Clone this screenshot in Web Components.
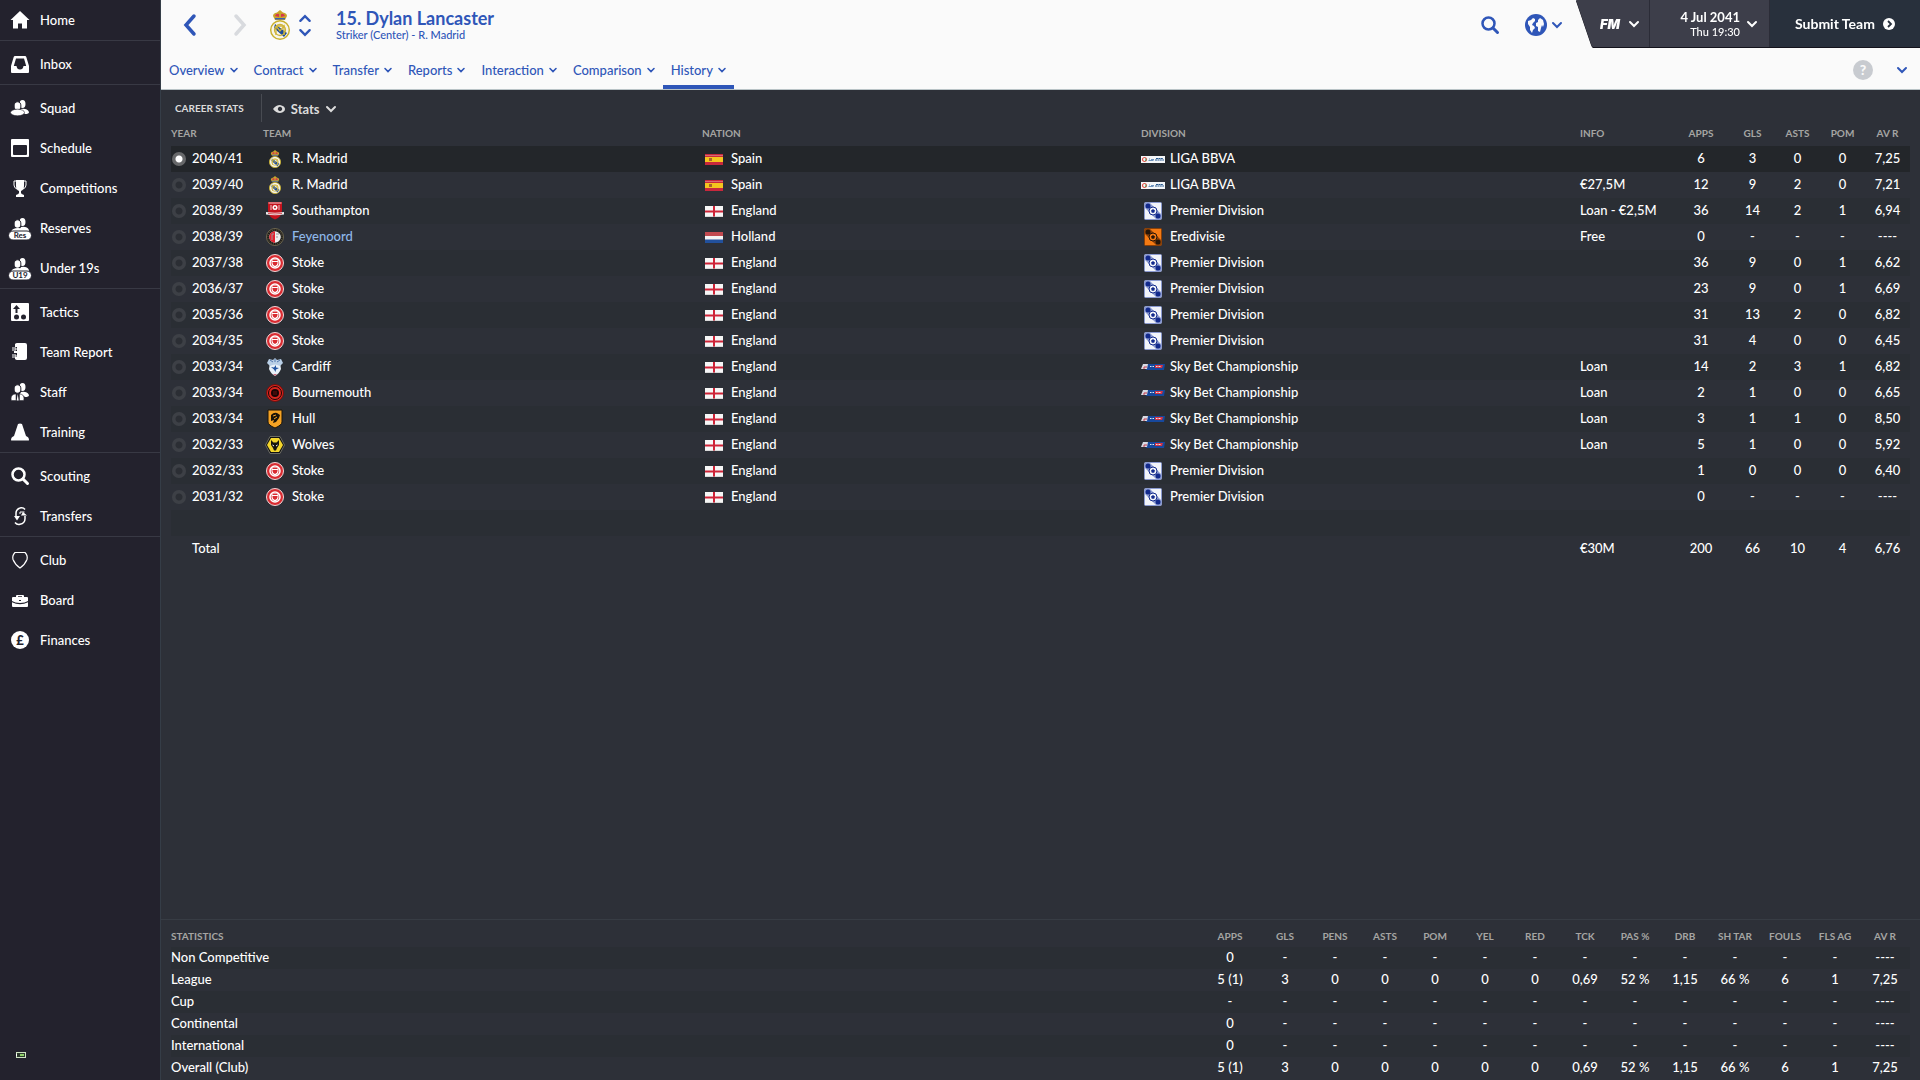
<!DOCTYPE html>
<html lang="en">
<head>
<meta charset="utf-8">
<title>Dylan Lancaster - History</title>
<style>
  :root {
    --blue: #2f56b8;
    --panel: #2d3038;
    --row-alt: #2a2e34;
    --row-selected: #23262a;
    --heading: #a5a5a3;
    --line: #373c44;
  }
  html, body { height: 100%; }
  body {
    margin: 0;
    background: var(--panel);
    color: #fff;
    font: 500 13px/16px Lato, "Liberation Sans", sans-serif;
  }
</style>
</head>
<body>
<fm-app>
  <fm-sidebar slot="sidebar">
    <fm-nav-group first>
      <fm-nav-item icon="home">Home</fm-nav-item>
    </fm-nav-group>
    <fm-nav-group>
      <fm-nav-item icon="inbox">Inbox</fm-nav-item>
    </fm-nav-group>
    <fm-nav-group>
      <fm-nav-item icon="squad">Squad</fm-nav-item>
      <fm-nav-item icon="schedule">Schedule</fm-nav-item>
      <fm-nav-item icon="trophy">Competitions</fm-nav-item>
      <fm-nav-item icon="reserves">Reserves</fm-nav-item>
      <fm-nav-item icon="under19">Under 19s</fm-nav-item>
    </fm-nav-group>
    <fm-nav-group>
      <fm-nav-item icon="tactics">Tactics</fm-nav-item>
      <fm-nav-item icon="report">Team Report</fm-nav-item>
      <fm-nav-item icon="staff">Staff</fm-nav-item>
      <fm-nav-item icon="cone">Training</fm-nav-item>
    </fm-nav-group>
    <fm-nav-group>
      <fm-nav-item icon="search">Scouting</fm-nav-item>
      <fm-nav-item icon="transfers">Transfers</fm-nav-item>
    </fm-nav-group>
    <fm-nav-group last>
      <fm-nav-item icon="club">Club</fm-nav-item>
      <fm-nav-item icon="board">Board</fm-nav-item>
      <fm-nav-item icon="finances">Finances</fm-nav-item>
    </fm-nav-group>
  </fm-sidebar>
  <fm-header slot="header">
    <span slot="title">15. Dylan Lancaster</span>
    <span slot="subtitle">Striker (Center) - R. Madrid</span>
    <fm-tab slot="tabs">Overview</fm-tab>
    <fm-tab slot="tabs">Contract</fm-tab>
    <fm-tab slot="tabs">Transfer</fm-tab>
    <fm-tab slot="tabs">Reports</fm-tab>
    <fm-tab slot="tabs">Interaction</fm-tab>
    <fm-tab slot="tabs">Comparison</fm-tab>
    <fm-tab slot="tabs" active>History</fm-tab>
  </fm-header>
  <fm-career-stats></fm-career-stats>
  <fm-season-stats slot="footer"></fm-season-stats>
</fm-app>

<script>
const people = `
  <ellipse cx="11.5" cy="4" rx="3" ry="4"/>
  <path d="M10 9q6-1 8 3 0 2-4 2-3-3-5-3z"/>
  <ellipse cx="6.5" cy="6" rx="3.4" ry="4.2" stroke="#23222d" stroke-width="1"/>`;

const badge = (text) => `<g transform="translate(0 -1)">${people}<ellipse cx="7" cy="13" rx="6.5" ry="3"/></g>
  <rect x="-2.5" y="12" width="23" height="9" rx="4.5" stroke="#23222d"/>
  <text x="9" y="19" text-anchor="middle" fill="#23222d" font-size="8" font-weight="700">${text}</text>`;

const football = (bg, ink, edge) => `
  <rect x=".5" y=".5" width="17" height="17" rx="1" fill="${bg}" stroke="${edge}"/>
  <path d="M1 1h5l11 11v5h-5L1 6z" fill="${edge}"/>
  <circle cx="4" cy="4" r="2.5" fill="${ink}"/><circle cx="14" cy="14" r="2.5" fill="${ink}"/>
  <circle cx="9" cy="9" r="4" fill="${bg}" stroke="${ink}"/>
  <path d="m9 7 2 1.5-.8 2.3H7.800L7 8.500z" fill="${ink}"/>`;

// name: [width, height, markup]
const ICONS = {
  home: [18, 18, '<path d="M9 0l9.500 9H16v8.500h-5v-5H7v5H2V9H-.5z"/>'],
  inbox: [18, 18, '<path fill-rule="evenodd" d="M4 1h10q1 0 1.300 1L18 11v6q0 1-1 1H1q-1 0-1-1v-6l2.700-9Q3 1 4 1zM5 3.500 2.800 11H5.500q.5 3.500 3.500 3.500t3.500-3.500h2.700L13 3.500z"/>'],
  squad: [18, 18, `<g transform="translate(0 1)">${people}<ellipse cx="6.5" cy="12.5" rx="7" ry="3.300" stroke="#23222d" stroke-width=".6"/></g>`],
  schedule: [18, 18, '<path fill-rule="evenodd" d="M1 0h16q1 0 1 1v16q0 1-1 1H1q-1 0-1-1V1q0-1 1-1zM3 6Q2 6 2 7v8q0 1 1 1h12q1 0 1-1V7q0-1-1-1z"/>'],
  trophy: [18, 18, '<path d="M5 1h8v6q0 4-3 5v2q0 1 3 2v2H5v-2q3-1 3-2v-2Q5 11 5 7z"/><path d="M5 2H3v4q0 3 3 4M13 2h2v4q0 3-3 4" fill="none" stroke="currentColor"/>'],
  reserves: [18, 18, badge('Res')],
  under19: [18, 18, badge('U19')],
  tactics: [18, 18, '<rect width="18" height="18" rx="1"/><g fill="#23222d"><circle cx="5.5" cy="14" r="2.5"/><circle cx="12.5" cy="14" r="2.5"/><path d="M5.500 2 9 6H6.500v4h-2V6H2z"/></g>'],
  report: [18, 18, '<path d="M4 1q1-1 2-1h8q2 0 2 2v13q0 2-2 2H6q-1 0-2-1v-2h2v-4H3V8h3V4H4z"/><path d="M1 5h4v2H1M1 12h4v2H1" fill="none" stroke="currentColor"/>'],
  staff: [18, 18, `${people}<path d="M5 11q-5 0-5 5 0 1.500 1 1.500h4zM8.500 11q4.500 0 4.500 5 0 1.500-1 1.500H8.500z" stroke="#23222d" stroke-width=".5"/><path d="m6.700 11 1 6.500h-2z"/>`],
  cone: [18, 18, '<path d="M7 1q2-1 4 0l4 12q3 1 3 4 0 .5-1 .5H1q-1 0-1-.5 0-3 3-4z"/>'],
  search: [18, 18, '<circle cx="7.5" cy="7.5" r="6" fill="none" stroke="currentColor" stroke-width="2.5"/><path d="m12 12 4.500 4.500" stroke="currentColor" stroke-width="3" stroke-linecap="round"/>'],
  transfers: [18, 18, '<path d="M14 2.500q-1.500-2-4-1.700-5 1-5 5.500V9M4 15.500q2 2.500 5 1.800 5-1 5-5.500V9" fill="none" stroke="currentColor" stroke-width="1.5"/><path d="M3 9h6l-3 4.500zM10 8.500 12 5l4 3.500z"/><path d="M13.500 5H9v2" fill="none" stroke="currentColor"/>'],
  club: [18, 18, '<path d="M4 1.500h10q3 3 2 7-2 5-7 8.500Q4 13.500 2 8.500q-1-4 2-7z" fill="none" stroke="currentColor" stroke-width="1.2"/>'],
  board: [18, 18, '<path fill-rule="evenodd" d="M5 6V5q0-1 1-1h6q1 0 1 1v1h3q1 0 1 1v3q-3 2-8 2t-8-2V7q0-1 1-1zm2 0h4V5.300H7zM8 9v1h2V9z"/><path d="M1 11.200q4 2 8 2t8-2V15q0 1-1 1H2q-1 0-1-1z"/>'],
  finances: [18, 18, '<circle cx="9" cy="9" r="9"/><text x="9" y="13.5" text-anchor="middle" fill="#23222d" font-size="13" font-weight="900">£</text>'],
  back: [12, 22, '<path d="M10 2 2 11l8 9" fill="none" stroke="currentColor" stroke-width="3.5" stroke-linecap="round"/>'],
  forward: [12, 22, '<path d="m2 2 8 9-8 9" fill="none" stroke="currentColor" stroke-width="3.5" stroke-linecap="round"/>'],
  down: [10, 6, '<path d="m1 1 4 4 4-4" fill="none" stroke="currentColor" stroke-width="2" stroke-linecap="round"/>'],
  small: [8, 6, '<path d="m1 1.500 3 3 3-3" fill="none" stroke="currentColor" stroke-width="1.6" stroke-linecap="round"/>'],
  up: [10, 6, '<path d="m1 5 4-4 4 4" fill="none" stroke="currentColor" stroke-width="2" stroke-linecap="round"/>'],
  globe: [22, 22, '<circle cx="11" cy="11" r="11"/><path fill="#fafafa" d="M3 7l3-1 2-2 2 1v2L8 9l-1 2 2 1 1 2-2 2-1 3-2-3v-3L3 10zM13 6l2-2 3 2 1 4-1 3-1-2-1 3-1 4-2-1v-4l-2-1v-3l2-1z"/>'],
  go: [12, 12, '<circle cx="6" cy="6" r="6"/><path d="m5 3 3 3-3 3" fill="none" stroke="#28303c" stroke-width="1.8"/>'],
  help: [20, 20, '<circle cx="10" cy="10" r="10"/><text x="10" y="15" text-anchor="middle" fill="#fafafa" font-size="14" font-weight="900">?</text>'],
  eye: [12, 8, '<path fill-rule="evenodd" d="M0 4q3-4 7-4 5 1 5 4t-5 4Q3 8 0 4zm7-2.200a2.200 2.200 0 1 0 .01 0z"/>'],
  battery: [10, 6, '<rect x=".5" y=".5" width="9" height="5" fill="#2c3a2c" stroke="#cfe3c2"/><path d="M0 2h1v2H0z"/><path d="M4 2h4v2H4z" fill="#8fd16a"/>'],

  madrid: [20, 30, `
    <path d="M3 6q0-3 4-3.500L10 0l3 2.500q4 .5 4 3.500l-2 4H5z" fill="#c9a52c"/>
    <path d="M5 6q1-3 4-2v3zM15 6q-1-3-4-2v3z" fill="#d7364a"/><path d="M5 8h10v1.500H5z" fill="#3a62b0"/>
    <circle cx="10" cy="20" r="9.3" fill="#f7f5ea" stroke="#c9b02c" stroke-width="1.4"/>
    <path d="m5 14 12 9-3 4L4 18z" fill="#1d4c9c"/>
    <circle cx="10" cy="20" r="5.5" fill="none" stroke="#cfb43a" stroke-width="1.3"/>
    <path d="M6 16v9M6 16l4 5 4-5v9M6 16h7" stroke="#cfb43a" stroke-width="1.3" fill="none"/>`],
  southampton: [18, 18, `
    <path d="M2 0h14v8q0 7-7 9.500Q2 15 2 8z" fill="#c5131d"/>
    <path d="M5 3v5M13 3v5M2.500 1h13" stroke="#f0c9cb"/><circle cx="9" cy="5.5" r="2.5" fill="#fff"/><circle cx="9" cy="5.5" r="1" fill="#c5131d"/>
    <path d="M0 10q9 1.500 18 0v2.500q-9 1.500-18 0z" fill="#eee"/><path d="M2 11.500q7 1 14 0" stroke="#c5131d" fill="none" stroke-width=".7"/>`],
  feyenoord: [18, 18, `
    <circle cx="9" cy="9" r="8.5" fill="#191714" stroke="#6f6850"/><circle cx="9" cy="9" r="7" fill="none" stroke="#6f6850" stroke-dasharray="1 1"/>
    <circle cx="9" cy="9" r="5.8" fill="#eee"/><path d="M9 3.200a5.800 5.800 0 0 0 0 11.600z" fill="#e3202e"/>
    <path d="M6 6h2M6 6v6M10 6h3M10 9h2" stroke="#999"/>`],
  stoke: [18, 18, `
    <circle cx="9" cy="9" r="8.5" fill="#d92b31" stroke="#f3d7d8"/>
    <circle cx="9" cy="9" r="5" fill="#d92b31" stroke="#fff" stroke-width="1.5"/>
    <path d="M5.500 5.500h7V9q0 3-3.500 4.500Q5.500 12 5.500 9z" fill="#fff"/><path d="M6.500 8h5v1q0 2-2.500 3-2.500-1-2.500-3zM6.500 6h5v1h-5z" fill="#d92b31"/>`],
  cardiff: [18, 18, `
    <path d="M4 5q5-3 10 0l1 6q-2 5-6 7-4-2-6-7z" fill="#e9f1f8"/>
    <path d="M3 1l4 1 2-2 2 2 4-1 2 4-3 3q-5-3-10 0L1 5z" fill="#b9cfe6"/>
    <path d="M4 2l3 2M14 2l-3 2M9 1v3" stroke="#5378ad"/>
    <path d="M5 9l3 .5L10 7v2.500l3 .5-3 1.500L9.500 14 8 11.500z" fill="#2153a0"/><path d="M7 16h4l-2 2z" fill="#c86b79"/>`],
  bournemouth: [18, 18, `
    <circle cx="9" cy="9" r="8.5" fill="#d9261f" stroke="#6d100e"/><circle cx="9" cy="9" r="6.5" fill="none" stroke="#190404" stroke-width="1"/>
    <circle cx="9" cy="9" r="4" fill="#190404"/><path d="M7 8h4M7 10h4" stroke="#6d100e"/>`],
  hull: [18, 18, `
    <path d="M2 0h14v12q0 3-7 6-7-3-7-6z" fill="#f5a324" stroke="#1c1509"/>
    <path d="M5 5q3-3 6-2l3 2-1 3-3 4-3 1 1-3-3 1z" fill="#1c1509"/><path d="m7 6 3-1M8 9l3-2M6 15h6" stroke="#f5a324"/>`],
  wolves: [20, 18, `
    <path d="M5 .5h10L19.500 9 15 17.500H5L.5 9z" fill="#121212" stroke="#6b6b62"/><path d="M6 2h8l4 7-4 7H6L2 9z" fill="#f4d62c"/>
    <path d="m6 4 2.500 2.500h3L14 4v5l-2 3-1 2.500H9L8 12 6 9z" fill="#16150f"/><path d="m7.500 9 1.500 1M12.500 9l-1.500 1" stroke="#fff"/>`],

  spain: [18, 11, '<path fill="#c8283c" d="M0 0h18v11H0z"/><path fill="#f4c51e" d="M0 3h18v5H0z"/><path fill="#e2a9a9" opacity=".5" d="M0 1h18v1H0z"/><path fill="#a8632b" d="M4 4h3v3H4z"/>'],
  england: [18, 11, '<path fill="#f6f6f6" d="M0 0h18v11H0z"/><path fill="#cf2438" d="M8 0h2v11H8zM0 4.500h18v2H0z"/><path fill="#bbb" opacity=".5" d="M0 10h18v1H0z"/>'],
  holland: [18, 11, '<path fill="#f4f4f4" d="M0 0h18v11H0z"/><path fill="#c24a50" d="M0 0h18v4H0z"/><path fill="#22509c" d="M0 7.500h18V11H0z"/>'],

  liga: [24, 7, '<path fill="#f4f6f8" d="M0 0h24v7H0z"/><circle cx="3.5" cy="3.5" r="2" fill="none" stroke="#e2574c" stroke-width="1.2"/><path d="M4.500 2.500a2 2 0 0 1 0 2.500" stroke="#3ba55d" fill="none"/><path d="M7.500 4.500h5M8 3h1M10 3.500h3" stroke="#6e93bd"/><path d="M14 4h9M15 2.500h7" stroke="#27598f" stroke-width="1.2" stroke-dasharray="2 .4"/>'],
  premier: [18, 18, football('#f2f4fa', '#12298c', '#8b9ad0')],
  eredivisie: [18, 18, football('#f47a14', '#22140a', '#8a4008')],
  skybet: [24, 8, '<path d="M7 1h17l-1 6H5z" fill="#17489c"/><path d="M2 1h5l-1 5H0z" fill="#d9dbe4"/><path d="M3 4h3M2 5h2" stroke="#c23b4c"/><path d="M14 2h8l-1 3h-7z" fill="#d8323f"/><path d="M9 3.500h4M15 3.500h5" stroke="#dfe7f5" stroke-dasharray="1 .5"/>'],
};

function define(name, html, setup) {
  const template = document.createElement('template');
  template.innerHTML = html;
  customElements.define(name, class extends HTMLElement {
    constructor() {
      super();
      this.attachShadow({ mode: 'open' }).append(template.content.cloneNode(true));
    }

    connectedCallback() {
      if (setup) setup(this, this.shadowRoot);
    }
  });
}

/* Icon: <fm-icon name="home" size="..."> where size is the drawn height */
define('fm-icon', `
  <style>
    :host { display: inline-flex; flex: none; }
    svg { display: block; fill: currentColor; overflow: visible; }
  </style>
`, (host, root) => {
  const [w, h, markup] = ICONS[host.getAttribute('name')];
  const height = Number(host.getAttribute('size')) || h;
  const width = Math.round(w * height / h);
  root.querySelector('svg')?.remove();
  root.innerHTML += `<svg viewBox="0 0 ${w} ${h}" width="${width}" height="${height}" aria-hidden="true">${markup}</svg>`;
});

define('fm-app', `
  <style>
    :host { display: flex; min-height: 100vh; }
    .page { flex: 1; min-width: 0; display: flex; flex-direction: column; border-left: 1px solid #353d47; }
    main { flex: 1; display: flex; flex-direction: column; }
    .content { flex: 1; }
  </style>
  <slot name="sidebar"></slot>
  <div class="page">
    <slot name="header"></slot>
    <main>
      <div class="content"><slot></slot></div>
      <slot name="footer"></slot>
    </main>
  </div>
`);

define('fm-sidebar', `
  <style>
    :host { display: flex; flex-direction: column; justify-content: space-between; width: 160px; flex: none; background: #23222d; }
    footer { padding: 0 16px 22px; line-height: 0; }
  </style>
  <nav aria-label="Main"><slot></slot></nav>
  <footer><fm-icon name="battery"></fm-icon></footer>
`);

define('fm-nav-group', `
  <style>
    :host { display: block; padding-top: 3px; border-bottom: 1px solid #383944; }
    :host([first]) { padding-top: 0; }
    :host([last]) { border-bottom: 0; }
  </style>
  <slot></slot>
`);

define('fm-nav-item', `
  <style>
    :host { display: block; }
    a { display: flex; align-items: center; gap: 11px; height: 40px; padding-left: 11px; color: #fff; text-decoration: none; }
    a:focus-visible { background: #2e2d3a; }
    span { padding-bottom: 1px; }
  </style>
  <a href="#"><span><slot></slot></span></a>
`, (host, root) => {
  const icon = document.createElement('fm-icon');
  icon.setAttribute('name', host.getAttribute('icon'));
  root.querySelector('a').prepend(icon);
});

define('fm-tab', `
  <style>
    :host { display: flex; }
    button {
      display: flex; align-items: center; gap: 5px; padding: 4px 8px 0;
      border: 0; border-bottom: 4px solid transparent; background: none;
      color: var(--blue); font: inherit; cursor: pointer;
    }
    :host([active]) button { border-color: var(--blue); }
  </style>
  <button type="button"><slot></slot><fm-icon name="small"></fm-icon></button>
`);

define('fm-header', `
  <style>
    :host { display: block; background: #fafafa; color: var(--blue); border-bottom: 1px solid #b9c3c6; }
    button { display: flex; align-items: center; padding: 0; border: 0; background: none; color: inherit; font: inherit; cursor: pointer; }
    .top { display: flex; align-items: flex-start; height: 50px; }
    .player { display: flex; align-items: center; height: 50px; padding-left: 23px; }
    .forward { color: #d8dade; margin: 0 24px 0 38px; }
    .steps { display: flex; flex-direction: column; gap: 7px; margin: 0 25px 0 9px; }
    h1 { margin: 0; font-size: 18px; line-height: 20px; font-weight: 700; }
    p { margin: 0; font-size: 11px; line-height: 14px; }
    .tools { display: flex; align-items: center; height: 50px; margin-left: auto; }
    .globe { gap: 5px; margin: 0 14px 0 26px; }
    .game { display: flex; height: 47px; color: #fff; filter: drop-shadow(0 1px 0 #14131c); }
    .slant { display: block; fill: #3d3e4a; }
    .game button { background: #3d3e4a; border-right: 1px solid #2b2c37; }
    .game .fm { width: 57px; gap: 9px; padding-left: 7px; font: italic 900 13px/16px Inter, sans-serif; }
    .game .date { width: 120px; justify-content: flex-end; gap: 7px; padding-right: 12px; text-align: right; }
    .date strong { display: block; font-size: 13px; line-height: 16px; }
    .date small { display: block; font-size: 11px; line-height: 14px; }
    .game .submit { width: 150px; padding-left: 25px; gap: 8px; background: #28303c; border: 0; font-size: 14px; font-weight: 700; }
    .tabs { display: flex; height: 39px; }
    .tabs nav { display: flex; }
    .side { display: flex; align-items: center; gap: 24px; margin-left: auto; padding-right: 13px; }
    .help { color: #c8cbd0; }
  </style>
  <div class="top">
    <div class="player">
      <button type="button" aria-label="Back"><fm-icon name="back"></fm-icon></button>
      <button type="button" class="forward" aria-label="Forward"><fm-icon name="forward"></fm-icon></button>
      <fm-icon name="madrid" size="30"></fm-icon>
      <div class="steps">
        <button type="button" aria-label="Previous player"><fm-icon name="up" size="7"></fm-icon></button>
        <button type="button" aria-label="Next player"><fm-icon name="down" size="7"></fm-icon></button>
      </div>
      <div>
        <h1><slot name="title"></slot></h1>
        <p><slot name="subtitle"></slot></p>
      </div>
    </div>
    <div class="tools">
      <button type="button" aria-label="Search"><fm-icon name="search"></fm-icon></button>
      <button type="button" class="globe" aria-label="World"><fm-icon name="globe"></fm-icon><fm-icon name="down"></fm-icon></button>
    </div>
    <div class="game">
      <svg class="slant" width="17" height="47" viewBox="0 0 17 47" aria-hidden="true"><path d="M0 0h17v47q-1 0-2-3z"/></svg>
      <button type="button" class="fm">FM<fm-icon name="down"></fm-icon></button>
      <button type="button" class="date"><span><strong>4 Jul 2041</strong><small>Thu 19:30</small></span><fm-icon name="down"></fm-icon></button>
      <button type="button" class="submit">Submit Team<fm-icon name="go"></fm-icon></button>
    </div>
  </div>
  <div class="tabs">
    <nav aria-label="Player"><slot name="tabs"></slot></nav>
    <div class="side">
      <button type="button" class="help" aria-label="Help"><fm-icon name="help"></fm-icon></button>
      <button type="button" aria-label="More"><fm-icon name="down"></fm-icon></button>
    </div>
  </div>
`);

const TEAMS = {
  'R. Madrid': 'madrid', Southampton: 'southampton', Feyenoord: 'feyenoord', Stoke: 'stoke',
  Cardiff: 'cardiff', Bournemouth: 'bournemouth', Hull: 'hull', Wolves: 'wolves',
};
const DIVISIONS = {
  'LIGA BBVA': 'liga', 'Premier Division': 'premier', Eredivisie: 'eredivisie', 'Sky Bet Championship': 'skybet',
};

// year, team, nation, division, info, apps, goals, assists, player of the match, average rating
const CAREER = [
  ['2040/41', 'R. Madrid', 'Spain', 'LIGA BBVA', '', '6', '3', '0', '0', '7,25'],
  ['2039/40', 'R. Madrid', 'Spain', 'LIGA BBVA', '€27,5M', '12', '9', '2', '0', '7,21'],
  ['2038/39', 'Southampton', 'England', 'Premier Division', 'Loan - €2,5M', '36', '14', '2', '1', '6,94'],
  ['2038/39', 'Feyenoord', 'Holland', 'Eredivisie', 'Free', '0', '-', '-', '-', '----'],
  ['2037/38', 'Stoke', 'England', 'Premier Division', '', '36', '9', '0', '1', '6,62'],
  ['2036/37', 'Stoke', 'England', 'Premier Division', '', '23', '9', '0', '1', '6,69'],
  ['2035/36', 'Stoke', 'England', 'Premier Division', '', '31', '13', '2', '0', '6,82'],
  ['2034/35', 'Stoke', 'England', 'Premier Division', '', '31', '4', '0', '0', '6,45'],
  ['2033/34', 'Cardiff', 'England', 'Sky Bet Championship', 'Loan', '14', '2', '3', '1', '6,82'],
  ['2033/34', 'Bournemouth', 'England', 'Sky Bet Championship', 'Loan', '2', '1', '0', '0', '6,65'],
  ['2033/34', 'Hull', 'England', 'Sky Bet Championship', 'Loan', '3', '1', '1', '0', '8,50'],
  ['2032/33', 'Wolves', 'England', 'Sky Bet Championship', 'Loan', '5', '1', '0', '0', '5,92'],
  ['2032/33', 'Stoke', 'England', 'Premier Division', '', '1', '0', '0', '0', '6,40'],
  ['2031/32', 'Stoke', 'England', 'Premier Division', '', '0', '-', '-', '-', '----'],
];

const tableStyles = `
  table { width: 100%; table-layout: fixed; border-collapse: collapse; }
  th, td { box-sizing: border-box; padding: 0; text-align: left; white-space: nowrap; font-weight: 500; }
  thead th { padding-bottom: 2px; color: var(--heading); font-size: 10px; line-height: 12px; font-weight: 700; }
  .n { padding-bottom: 2px; text-align: center; }
`;

const numbers = (values, tag = 'td') => values.map((v) => `<${tag} class="n">${v}</${tag}>`).join('');

define('fm-career-stats', `
  <style>
    ${tableStyles}
    :host { display: block; padding: 4px 10px 0; }
    .bar { display: flex; align-items: center; height: 27px; padding-left: 4px; }
    h2 { margin: 0; padding-right: 17px; font-size: 10px; line-height: 28px; color: #dcdcdc; border-right: 1px solid #484b52; }
    .view { display: flex; align-items: center; gap: 6px; padding: 2px 0 0 11px; border: 0; background: none; color: #dcdcdc; font: inherit; font-weight: 700; cursor: pointer; }
    thead th { height: 25px; }
    tbody td { height: 26px; }
    tbody tr:nth-child(odd) { background: var(--row-alt); }
    tbody tr:has(input:checked) { background: var(--row-selected); }
    .year { width: 92px; }
    .info { width: 92px; }
    .apps { width: 58px; }
    .num { width: 45px; }
    .fee { padding-bottom: 2px; }
    .cell { display: flex; align-items: center; }
    .mark { display: flex; justify-content: center; width: 24px; margin-right: 5px; }
    .cell a { padding-bottom: 2px; color: inherit; text-decoration: none; }
    .cell .foreign { color: #8fb8ea; }
    label { display: flex; align-items: center; gap: 6px; padding-left: 1px; }
    label span { padding-bottom: 2px; }
    input {
      appearance: none; width: 14px; height: 14px; margin: 0; border-radius: 50%;
      background: radial-gradient(circle, #2b2e34 3px, #3d4046 4px);
    }
    input:checked { background: radial-gradient(circle, #fff 3px, #67686a 4px); }
    .total td:first-child { padding: 0 0 2px 21px; }
  </style>
  <div class="bar">
    <h2>CAREER STATS</h2>
    <button type="button" class="view"><fm-icon name="eye"></fm-icon>Stats<fm-icon name="down"></fm-icon></button>
  </div>
  <table>
    <colgroup><col class="year"><col><col><col><col class="info"><col class="apps"><col class="num"><col class="num"><col class="num"><col class="num"></colgroup>
    <thead>
      <tr><th>YEAR</th><th>TEAM</th><th>NATION</th><th>DIVISION</th><th>INFO</th>${numbers(['APPS', 'GLS', 'ASTS', 'POM', 'AV R'], 'th')}</tr>
    </thead>
    <tbody></tbody>
  </table>
`, (host, root) => {
  const cell = (icon, size, text) => `
    <td><div class="cell"><span class="mark"><fm-icon name="${icon}" size="${size}"></fm-icon></span><a href="#"${text === 'Feyenoord' ? ' class="foreign"' : ''}>${text}</a></div></td>`;
  const sizes = { liga: 7, skybet: 8 };

  root.querySelector('tbody').innerHTML = CAREER.map(([year, team, nation, division, info, ...stats], i) => `
    <tr>
      <td><label><input type="radio" name="season"${i === 0 ? ' checked' : ''}><span>${year}</span></label></td>
      ${cell(TEAMS[team], 18, team)}
      ${cell(nation.toLowerCase(), 11, nation)}
      ${cell(DIVISIONS[division], sizes[DIVISIONS[division]] || 18, division)}
      <td class="fee">${info}</td>
      ${numbers(stats)}
    </tr>`).join('') + `
    <tr><td colspan="10"></td></tr>
    <tr class="total"><td>Total</td><td></td><td></td><td></td><td class="fee">€30M</td>${numbers(['200', '66', '10', '4', '6,76'])}</tr>`;
});

const SEASON_COLUMNS = ['APPS', 'GLS', 'PENS', 'ASTS', 'POM', 'YEL', 'RED', 'TCK', 'PAS %', 'DRB', 'SH TAR', 'FOULS', 'FLS AG', 'AV R'];
const played = ['5 (1)', '3', '0', '0', '0', '0', '0', '0,69', '52 %', '1,15', '66 %', '6', '1', '7,25'];
const unplayed = (apps) => [apps, ...Array(12).fill('-'), '----'];
const SEASON = [
  ['Non Competitive', unplayed('0')],
  ['League', played],
  ['Cup', unplayed('-')],
  ['Continental', unplayed('0')],
  ['International', unplayed('0')],
  ['Overall (Club)', played],
];

define('fm-season-stats', `
  <style>
    ${tableStyles}
    :host { display: block; padding: 7px 10px 1px; border-top: 1px solid var(--line); }
    thead th { height: 20px; }
    tbody th, tbody td { height: 22px; padding-bottom: 2px; }
    tbody tr:nth-child(odd) { background: var(--row-alt); }
    .apps { width: 60px; }
    .num { width: 50px; }
  </style>
  <table>
    <colgroup><col><col class="apps">${'<col class="num">'.repeat(13)}</colgroup>
    <thead><tr><th>STATISTICS</th>${numbers(SEASON_COLUMNS, 'th')}</tr></thead>
    <tbody>${SEASON.map(([label, stats]) => `<tr><th scope="row">${label}</th>${numbers(stats)}</tr>`).join('')}</tbody>
  </table>
`);
</script>
</body>
</html>
